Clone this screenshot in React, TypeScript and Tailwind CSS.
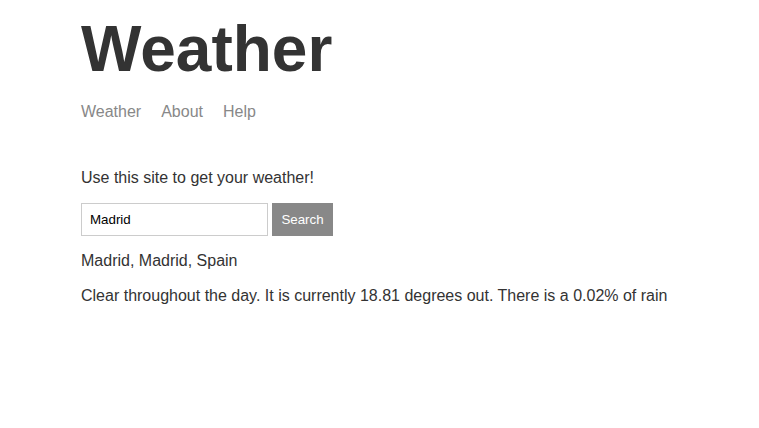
import React from "react";

export default function App() {
  return (
    <div className="min-h-[428px] bg-white">
      <div
        className="mx-auto w-[597px] text-[#333333] text-[16px]"
        style={{ fontFamily: '"Liberation Sans", Arial, sans-serif' }}
      >
        <header className="pt-[13px] mb-[48px]">
          <h1 className="text-[64px] font-bold leading-[1.15] mb-[16px]">Weather</h1>
          <nav className="flex leading-[1.15]">
            <a href="#" className="text-[#888888] mr-[20px]">Weather</a>
            <a href="#" className="text-[#888888] mr-[20px]">About</a>
            <a href="#" className="text-[#888888]">Help</a>
          </nav>
        </header>
        <p className="leading-[1.15] mb-[16px]">Use this site to get your weather!</p>
        <form className="flex gap-[4px] mb-[16px]" onSubmit={(e) => e.preventDefault()}>
          <input
            defaultValue="Madrid"
            className="w-[187px] h-[33px] border border-[#cccccc] px-[8px] text-[13.333px] text-black outline-none"
            style={{ fontFamily: '"Liberation Sans", Arial, sans-serif' }}
          />
          <button
            type="submit"
            className="w-[61px] h-[33px] border border-[#888888] bg-[#888888] text-white text-[13.333px] text-center"
            style={{ fontFamily: '"Liberation Sans", Arial, sans-serif' }}
          >
            Search
          </button>
        </form>
        <p className="leading-[1.15] mb-[16px]">Madrid, Madrid, Spain</p>
        <p className="leading-[1.15]">
          Clear throughout the day. It is currently 18.81 degrees out. There is a 0.02% of rain
        </p>
      </div>
    </div>
  );
}
